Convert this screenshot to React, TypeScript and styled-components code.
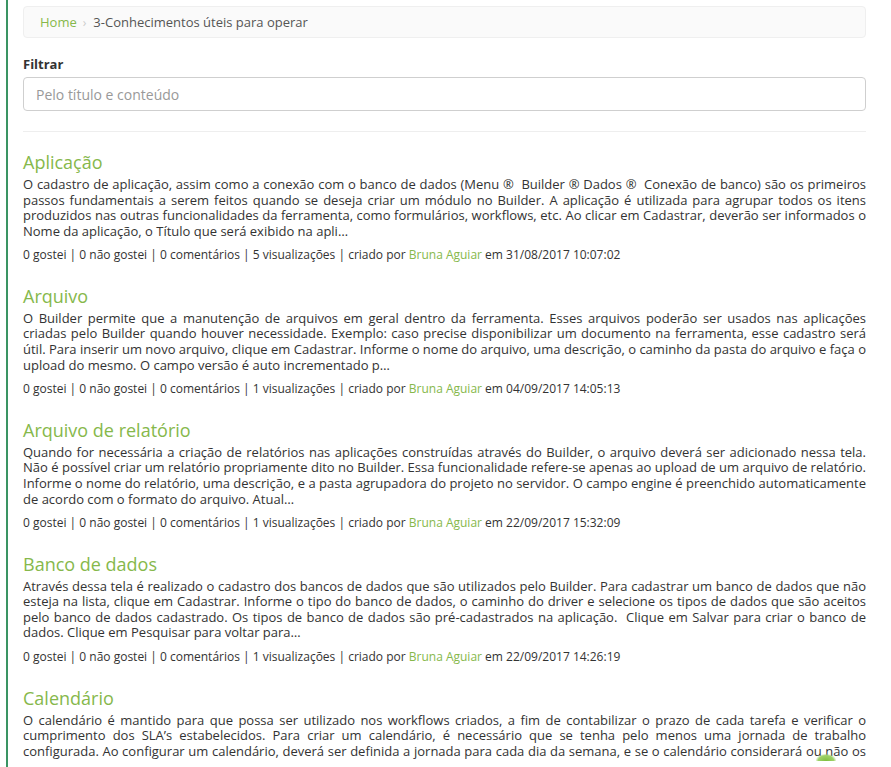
import { createGlobalStyle, styled } from 'styled-components';

const GlobalStyle = createGlobalStyle`
  html, body {
    margin: 0;
    padding: 0;
    background: #fff;
  }
  body {
    font-family: "Open Sans", "Noto Sans", sans-serif;
    color: #333;
  }
`;

const Page = styled.div`
  display: flex;
  min-height: 100vh;
`;

const SideRule = styled.div`
  width: 2px;
  margin-left: 6px;
  background: #3a9463;
  flex-shrink: 0;
`;

const Main = styled.main`
  flex: 1;
  padding: 6px 25px 0 15px;
  box-sizing: border-box;
  min-width: 0;
`;

const Breadcrumb = styled.nav`
  display: flex;
  align-items: center;
  height: 32px;
  padding: 0 16px;
  background: #fafafa;
  border: 1px solid #efefef;
  border-radius: 4px;
  box-sizing: border-box;
  font-size: 13px;
  color: #555;
`;

const Crumb = styled.a`
  color: #86b84b;
  text-decoration: none;
`;

const Sep = styled.span`
  color: #ccc;
  margin: 0 7px 0 6px;
  font-size: 12px;
`;

const FilterLabel = styled.label`
  display: block;
  margin-top: 17px;
  font-size: 13px;
  font-weight: 700;
  color: #333;
  line-height: 18px;
`;

const FilterInput = styled.input`
  display: block;
  width: 100%;
  height: 34px;
  margin-top: 4px;
  padding: 0 12px;
  box-sizing: border-box;
  border: 1px solid #cfcfcf;
  border-radius: 4px;
  font-family: "Open Sans", sans-serif;
  font-size: 14px;
  color: #555;
  outline: none;
  &::placeholder {
    color: #999;
  }
`;

const Divider = styled.hr`
  border: 0;
  border-top: 1px solid #eee;
  margin: 20px 0 19px;
`;

const Entry = styled.article`
  margin-bottom: 22px;
`;

const EntryTitle = styled.h3`
  margin: 0;
  font-size: 18px;
  line-height: 22px;
  font-weight: 400;
  color: #86b84b;
`;

const EntryBody = styled.p<{ $cut?: boolean }>`
  margin: 4px 0 0;
  font-size: 13px;
  line-height: 15.6px;
  text-align: justify;
  text-align-last: ${(p) => (p.$cut ? 'justify' : 'auto')};
  color: #333;
`;

const Meta = styled.div`
  margin-top: 6.5px;
  font-size: 12px;
  line-height: 17px;
  color: #333;
`;

const Author = styled.a`
  color: #86b84b;
  text-decoration: none;
`;

const ScrollHint = styled.span`
  position: fixed;
  left: 816px;
  top: 754px;
  width: 20px;
  height: 7px;
  border-radius: 50% 50% 0 0;
  background: radial-gradient(ellipse at 50% 100%, #7fbf3f 0%, #9fd26a 55%, rgba(159, 210, 106, 0) 75%);
`;

type Item = {
  title: string;
  body: string;
  views: number;
  date: string;
  cut?: boolean;
};

const items: Item[] = [
  {
    title: 'Aplicação',
    body: 'O cadastro de aplicação, assim como a conexão com o banco de dados (Menu ®\u00a0 Builder ® Dados ®\u00a0 Conexão de banco) são os primeiros passos fundamentais a serem feitos quando se deseja criar um módulo no Builder. A aplicação é utilizada para agrupar todos os itens produzidos nas outras funcionalidades da ferramenta, como formulários, workflows, etc. Ao clicar em Cadastrar, deverão ser informados o Nome da aplicação, o Título que será exibido na apli…',
    views: 5,
    date: '31/08/2017 10:07:02',
  },
  {
    title: 'Arquivo',
    body: 'O Builder permite que a manutenção de arquivos em geral dentro da ferramenta. Esses arquivos poderão ser usados nas aplicações criadas pelo Builder quando houver necessidade. Exemplo: caso precise disponibilizar um documento na ferramenta, esse cadastro será útil. Para inserir um novo arquivo, clique em Cadastrar. Informe o nome do arquivo, uma descrição, o caminho da pasta do arquivo e faça o upload do mesmo. O campo versão é auto incrementado p…',
    views: 1,
    date: '04/09/2017 14:05:13',
  },
  {
    title: 'Arquivo de relatório',
    body: 'Quando for necessária a criação de relatórios nas aplicações construídas através do Builder, o arquivo deverá ser adicionado nessa tela. Não é possível criar um relatório propriamente dito no Builder. Essa funcionalidade refere-se apenas ao upload de um arquivo de relatório. Informe o nome do relatório, uma descrição, e a pasta agrupadora do projeto no servidor. O campo engine é preenchido automaticamente de acordo com o formato do arquivo. Atual…',
    views: 1,
    date: '22/09/2017 15:32:09',
  },
  {
    title: 'Banco de dados',
    body: 'Através dessa tela é realizado o cadastro dos bancos de dados que são utilizados pelo Builder. Para cadastrar um banco de dados que não esteja na lista, clique em Cadastrar. Informe o tipo do banco de dados, o caminho do driver e selecione os tipos de dados que são aceitos pelo banco de dados cadastrado. Os tipos de banco de dados são pré-cadastrados na aplicação.\u00a0 Clique em Salvar para criar o banco de dados. Clique em Pesquisar para voltar para…',
    views: 1,
    date: '22/09/2017 14:26:19',
  },
  {
    title: 'Calendário',
    body: 'O calendário é mantido para que possa ser utilizado nos workflows criados, a fim de contabilizar o prazo de cada tarefa e verificar o cumprimento dos SLA’s estabelecidos. Para criar um calendário, é necessário que se tenha pelo menos uma jornada de trabalho configurada. Ao configurar um calendário, deverá ser definida a jornada para cada dia da semana, e se o calendário considerará ou não os',
    views: 1,
    date: '22/09/2017 14:30:41',
    cut: true,
  },
];

export default function App() {
  return (
    <>
      <GlobalStyle />
      <Page>
        <SideRule />
        <Main>
          <Breadcrumb>
            <Crumb href="#">Home</Crumb>
            <Sep>›</Sep>
            <span>3-Conhecimentos úteis para operar</span>
          </Breadcrumb>
          <FilterLabel htmlFor="filtro">Filtrar</FilterLabel>
          <FilterInput id="filtro" placeholder="Pelo título e conteúdo" />
          <Divider />
          {items.map((it) => (
            <Entry key={it.title}>
              <EntryTitle>{it.title}</EntryTitle>
              <EntryBody $cut={it.cut}>{it.body}</EntryBody>
              {!it.cut && (
                <Meta>
                  0 gostei | 0 não gostei | 0 comentários | {it.views} visualizações | criado por{' '}
                  <Author href="#">Bruna Aguiar</Author> em {it.date}
                </Meta>
              )}
            </Entry>
          ))}
        </Main>
      </Page>
      <ScrollHint />
    </>
  );
}
